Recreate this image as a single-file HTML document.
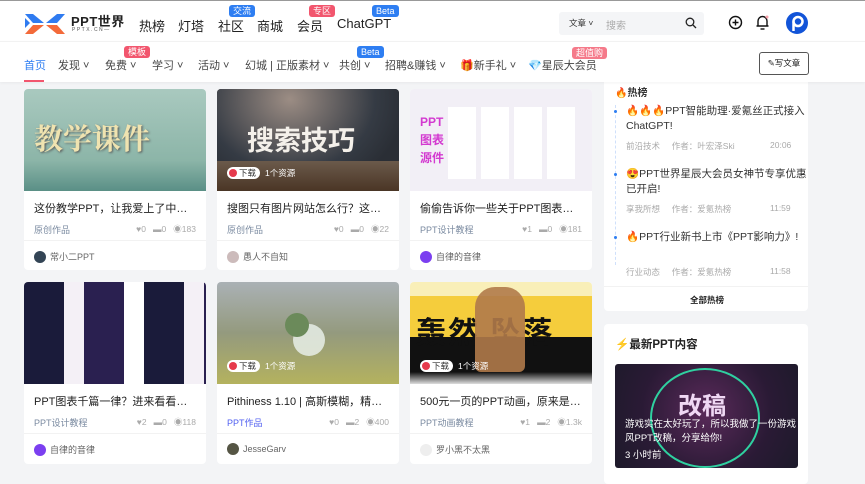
<!DOCTYPE html>
<html><head><meta charset="utf-8">
<style>
*{margin:0;padding:0;box-sizing:border-box}
body{width:865px;height:474px;overflow:hidden;background:#f3f4f6;font-family:"Liberation Sans","Noto Sans CJK SC",sans-serif;color:#333;position:relative}
.a{position:absolute}
.hdr{left:0;top:0;width:865px;height:41px;background:#fff;border-top:1px solid #999;z-index:5}
.nav{left:0;top:41px;width:865px;height:41px;background:#fff;border-top:1px solid #f2f2f2;box-shadow:0 1px 3px rgba(0,0,0,.05);z-index:5}
.t{font-size:13px;color:#222;white-space:nowrap}
.n{font-size:11px;color:#444;white-space:nowrap}
.badge{font-size:9px;color:#fff;border-radius:3px;padding:0 4px;line-height:12px;height:12px}
.card{background:#fff;border-radius:4px;overflow:hidden;width:182px}
.img{position:absolute;left:0;top:0;width:182px;height:102px;overflow:hidden}
.ttl{position:absolute;left:10px;top:111px;width:164px;font-size:11px;color:#222;white-space:nowrap;overflow:hidden;text-overflow:ellipsis}
.cat{position:absolute;left:10px;top:134px;font-size:9px;color:#7a8aa0}
.st{position:absolute;right:10px;top:134px;font-size:8.5px;color:#aaa;white-space:nowrap}
.div{position:absolute;left:0;top:151px;width:182px;height:1px;background:#f2f2f2}
.au{position:absolute;left:10px;top:161px;font-size:9px;color:#666;display:flex;align-items:center;gap:4px;white-space:nowrap}
.av{width:12px;height:12px;border-radius:50%;display:inline-block}
.dl{position:absolute;left:10px;top:78px;font-size:8.5px;color:#fff;display:flex;align-items:center;gap:5px}
.dl b{background:#fff;color:#333;border-radius:8px;padding:0 4px 0 2px;font-weight:normal;display:flex;align-items:center;gap:2px;height:12px}
.dl i{width:8px;height:8px;border-radius:50%;background:#e63a4c;display:inline-block}
.side{background:#fff;border-radius:4px}
.hi{font-size:10.5px;color:#333;line-height:15px;white-space:nowrap}
.hm{font-size:8.5px;color:#aaa}
</style></head><body>
<div class="a hdr">
 <svg class="a" style="left:24px;top:11px" width="42" height="24" viewBox="0 0 42 24">
  <path d="M1 2 L9 2 L20 11 L9 11 Z" fill="#2f7bf0"/><path d="M41 2 L33 2 L22 11 L33 11 Z" fill="#2f7bf0"/>
  <path d="M1 22 L9 22 L20 13 L9 13 Z" fill="#f36a3a"/><path d="M41 22 L33 22 L22 13 L33 13 Z" fill="#f36a3a"/>
  <path d="M1 6 L6 11 L1 16Z" fill="#2f7bf0"/></svg>
 <div class="a" style="left:71px;top:10px;font-size:13px;font-weight:bold;color:#222;letter-spacing:.5px">PPT世界</div>
 <div class="a" style="left:72px;top:26px;font-size:5px;color:#555;letter-spacing:1.5px">PPTX.CN—</div>
 <div class="a t" style="left:139px;top:15px">热榜</div>
 <div class="a t" style="left:178px;top:15px">灯塔</div>
 <div class="a t" style="left:218px;top:15px">社区</div>
 <div class="a badge" style="left:229px;top:4px;background:#2e7ef2">交流</div>
 <div class="a t" style="left:257px;top:15px">商城</div>
 <div class="a t" style="left:297px;top:15px">会员</div>
 <div class="a badge" style="left:309px;top:4px;background:#f2566e">专区</div>
 <div class="a t" style="left:337px;top:15px">ChatGPT</div>
 <div class="a badge" style="left:372px;top:4px;background:#2e7ef2">Beta</div>
 <div class="a" style="left:559px;top:11px;width:145px;height:23px;background:#f4f5f7;border-radius:3px"></div>
 <div class="a" style="left:569px;top:16px;font-size:8.5px;color:#333">文章 ˅</div>
 <div class="a" style="left:606px;top:16px;font-size:10px;color:#aaa">搜索</div>
 <svg class="a" style="left:685px;top:16px" width="12" height="12" viewBox="0 0 12 12"><circle cx="5" cy="5" r="3.8" fill="none" stroke="#222" stroke-width="1.3"/><path d="M8 8 L11 11" stroke="#222" stroke-width="1.3"/></svg>
 <svg class="a" style="left:728px;top:14px" width="15" height="15" viewBox="0 0 15 15"><circle cx="7.5" cy="7.5" r="6" fill="none" stroke="#111" stroke-width="1.4"/><path d="M7.5 4.5v6M4.5 7.5h6" stroke="#111" stroke-width="1.4"/></svg>
 <svg class="a" style="left:755px;top:13px" width="15" height="17" viewBox="0 0 15 17"><path d="M3 12 V7 a4.5 4.5 0 0 1 9 0 V12 H1.5 H13.5" fill="none" stroke="#111" stroke-width="1.4"/><path d="M5.5 15h4" stroke="#111" stroke-width="1.4"/><circle cx="12" cy="3" r="1.5" fill="#f7a0a8"/></svg>
 <svg class="a" style="left:786px;top:11px" width="22" height="22" viewBox="0 0 22 22"><circle cx="11" cy="11" r="11" fill="#1254d8"/><circle cx="12" cy="9.5" r="4.5" fill="none" stroke="#fff" stroke-width="2.5"/><path d="M7.5 9.5 V19" stroke="#fff" stroke-width="2.5"/></svg>
</div>
<div class="a nav">
 <div class="a n" style="left:24px;top:15px;color:#2e7ef2">首页</div>
 <div class="a" style="left:24px;top:38px;width:20px;height:2px;background:#f2566e"></div>
 <div class="a n" style="left:58px;top:15px">发现 ˅</div>
 <div class="a n" style="left:105px;top:15px">免费 ˅</div>
 <div class="a badge" style="left:124px;top:4px;background:#f2566e">模板</div>
 <div class="a n" style="left:152px;top:15px">学习 ˅</div>
 <div class="a n" style="left:198px;top:15px">活动 ˅</div>
 <div class="a n" style="left:245px;top:15px">幻城 | 正版素材 ˅</div>
 <div class="a n" style="left:339px;top:15px">共创 ˅</div>
 <div class="a badge" style="left:357px;top:4px;background:#2e7ef2">Beta</div>
 <div class="a n" style="left:385px;top:15px">招聘&amp;赚钱 ˅</div>
 <div class="a n" style="left:460px;top:15px">🎁新手礼 ˅</div>
 <div class="a n" style="left:528px;top:15px">💎星辰大会员</div>
 <div class="a badge" style="left:572px;top:5px;background:#f57a8a">超值购</div>
 <div class="a" style="left:759px;top:10px;width:50px;height:23px;border:1px solid #555;border-radius:3px;font-size:8.5px;text-align:center;line-height:21px;color:#222;white-space:nowrap">✎写文章</div>
</div>

<!-- row1 -->
<div class="a card" style="left:24px;top:89px;height:181px">
 <div class="img" style="background:linear-gradient(180deg,#a9c9bf,#8cb5a8 70%,#5a8f86)"><div class="a" style="left:10px;top:28px;font-size:29px;font-family:'Noto Serif CJK SC',serif;color:#efe3b0;font-weight:bold;text-shadow:1px 1px 2px #555">教学课件</div></div>
 <div class="ttl">这份教学PPT，让我爱上了中国古诗词</div><div class="cat">原创作品</div><div class="st">♥0 &nbsp; ▬0 &nbsp; ◉183</div><div class="div"></div>
 <div class="au"><span class="av" style="background:#345"></span>常小二PPT</div>
</div>
<div class="a card" style="left:217px;top:89px;height:181px">
 <div class="img" style="background:radial-gradient(ellipse at 40% 10%,#9c8d84,#353b44 55%,#2a2e35 75%),#333"><div class="a" style="left:0;top:72px;width:182px;height:30px;background:linear-gradient(#6b5a4b,#4a3525)"></div><div class="a" style="left:30px;top:30px;font-size:27px;color:#f4f0ea;font-weight:bold">搜索技巧</div><div class="dl"><b><i></i>下载</b>1个资源</div></div>
 <div class="ttl">搜图只有图片网站怎么行？这三个网站</div><div class="cat">原创作品</div><div class="st">♥0 &nbsp; ▬0 &nbsp; ◉22</div><div class="div"></div>
 <div class="au"><span class="av" style="background:#cbb"></span>愚人不自知</div>
</div>
<div class="a card" style="left:410px;top:89px;height:181px">
 <div class="img" style="background:#f2eff6"><div class="a" style="left:10px;top:24px;font-size:12px;line-height:18px;color:#d33ad0;font-weight:bold">PPT<br>图表<br>源件</div>
 <div class="a" style="left:38px;top:18px;width:130px;height:72px;background:repeating-linear-gradient(90deg,#fff 0 28px,#f2eff6 28px 33px)"></div></div>
 <div class="ttl">偷偷告诉你一些关于PPT图表的事情</div><div class="cat">PPT设计教程</div><div class="st">♥1 &nbsp; ▬0 &nbsp; ◉181</div><div class="div"></div>
 <div class="au"><span class="av" style="background:#7b3ff0"></span>自律的音律</div>
</div>
<!-- row2 -->
<div class="a card" style="left:24px;top:282px;height:182px">
 <div class="img" style="background:repeating-linear-gradient(90deg,#1a1b3a 0 40px,#f4f0f6 40px 60px,#2a2050 60px 100px,#fff 100px 120px)"></div>
 <div class="ttl">PPT图表千篇一律？进来看看什么叫高级</div><div class="cat">PPT设计教程</div><div class="st">♥2 &nbsp; ▬0 &nbsp; ◉118</div><div class="div"></div>
 <div class="au"><span class="av" style="background:#7b3ff0"></span>自律的音律</div>
</div>
<div class="a card" style="left:217px;top:282px;height:182px">
 <div class="img" style="background:linear-gradient(180deg,#aab1b5,#949a7e 50%,#b4b25e)"><div class="a" style="left:76px;top:42px;width:32px;height:32px;border-radius:50%;background:#e8efe8;opacity:.85"></div><div class="a" style="left:68px;top:31px;width:24px;height:24px;border-radius:50%;background:#6b8a5a"></div><div class="dl"><b><i></i>下载</b>1个资源</div></div>
 <div class="ttl">Pithiness 1.10 | 高斯模糊，精美图表</div><div class="cat" style="color:#4f5ef0">PPT作品</div><div class="st">♥0 &nbsp; ▬2 &nbsp; ◉400</div><div class="div"></div>
 <div class="au"><span class="av" style="background:#554"></span>JesseGarv</div>
</div>
<div class="a card" style="left:410px;top:282px;height:182px">
 <div class="img" style="background:linear-gradient(180deg,#f9efb8 0 14px,#f5cd3c 14px 55px,#111 55px 90px,#ddd)"><div class="a" style="left:6px;top:26px;font-size:30px;font-weight:bold;color:#111;letter-spacing:2px;white-space:nowrap">轰然 坠落</div><div class="a" style="left:65px;top:5px;width:50px;height:85px;background:#b07a4a;border-radius:20px 20px 6px 6px;opacity:.9"></div><div class="dl"><b><i></i>下载</b>1个资源</div></div>
 <div class="ttl">500元一页的PPT动画，原来是这样做的</div><div class="cat">PPT动画教程</div><div class="st">♥1 &nbsp; ▬2 &nbsp; ◉1.3k</div><div class="div"></div>
 <div class="au"><span class="av" style="background:#eee"></span>罗小黑不太黑</div>
</div>

<!-- sidebar -->
<div class="a side" style="left:604px;top:70px;width:204px;height:241px"></div>
<div class="a" style="left:615px;top:84px;font-size:10px;font-weight:bold;z-index:6">🔥热榜</div>
<div class="a" style="left:615px;top:105px;width:1px;height:160px;border-left:1px dashed #cfe0fb"></div>
<div class="a" style="left:614px;top:110px;width:3px;height:3px;border-radius:50%;background:#2e7ef2"></div>
<div class="a hi" style="left:626px;top:104px">🔥🔥🔥PPT智能助理·爱氪丝正式接入<br>ChatGPT!</div>
<div class="a hm" style="left:626px;top:140px">前沿技术 &nbsp; &nbsp; 作者：叶宏泽Ski</div><div class="a hm" style="left:770px;top:140px">20:06</div>
<div class="a" style="left:614px;top:173px;width:3px;height:3px;border-radius:50%;background:#2e7ef2"></div>
<div class="a hi" style="left:626px;top:167px">😍PPT世界星辰大会员女神节专享优惠<br>已开启!</div>
<div class="a hm" style="left:626px;top:203px">享我所想 &nbsp; &nbsp; 作者：爱氪热榜</div><div class="a hm" style="left:770px;top:203px">11:59</div>
<div class="a" style="left:614px;top:236px;width:3px;height:3px;border-radius:50%;background:#2e7ef2"></div>
<div class="a hi" style="left:626px;top:230px">🔥PPT行业新书上市《PPT影响力》!</div>
<div class="a hm" style="left:626px;top:266px">行业动态 &nbsp; &nbsp; 作者：爱氪热榜</div><div class="a hm" style="left:770px;top:266px">11:58</div>
<div class="a" style="left:604px;top:286px;width:204px;height:1px;background:#f2f2f2"></div>
<div class="a" style="left:690px;top:294px;font-size:8.5px;font-weight:bold;color:#222">全部热榜</div>

<div class="a side" style="left:604px;top:324px;width:204px;height:160px"></div>
<div class="a" style="left:615px;top:336px;font-size:11.5px;font-weight:bold;color:#222">⚡最新PPT内容</div>
<div class="a" style="left:615px;top:364px;width:183px;height:104px;border-radius:3px;overflow:hidden;background:radial-gradient(circle at 50% 45%,#5a2a5a,#2a1a35 60%,#1d1a2a)">
 <div class="a" style="left:35px;top:4px;width:110px;height:100px;border-radius:50%;border:2px solid #2fd0a0"></div>
 <div class="a" style="left:63px;top:22px;font-size:24px;font-weight:bold;color:#f0d8f4">改稿</div>
 <div class="a" style="left:10px;top:54px;font-size:9.5px;color:#fff;line-height:14px;white-space:nowrap">游戏实在太好玩了，所以我做了一份游戏<br>风PPT改稿，分享给你!</div>
 <div class="a" style="left:10px;top:83px;font-size:9.5px;color:#fff">3 小时前</div>
</div>
</body></html>
